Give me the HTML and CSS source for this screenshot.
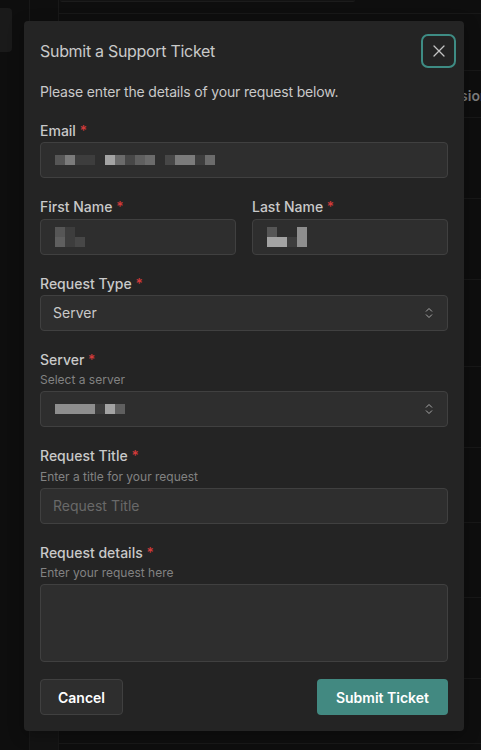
FILE: index.html
```html
<!DOCTYPE html>
<html lang="en">
<head>
  <meta charset="UTF-8" />
  <meta name="viewport" content="width=device-width, initial-scale=1" />
  <title>Support</title>
  <link rel="stylesheet" href="styles.css">
</head>
<body>
  <div class="app">
    <aside class="rail"><div class="rail-tab"></div></aside>
    <div class="gutter"><div class="gutter-foot"></div></div>
    <main class="content">
      <div class="topcard"></div>
      <div class="table">
        <div class="row bar"></div>
        <div class="row head">
          <span class="th">Session</span>
        </div>
        <div class="row"></div>
        <div class="row"></div>
        <div class="row tall"></div>
        <div class="row"></div>
        <div class="row short"></div>
        <div class="row short"></div>
        <div class="row"></div>
        <div class="row tiny"></div>
      </div>
    </main>
  </div>

  <div class="modal" role="dialog">
    <header class="modal-header">
      <h2 class="modal-title">Submit a Support Ticket</h2>
      <button class="close-btn" type="button">
        <svg width="12" height="12" viewBox="0 0 12 12"><path d="M1 1L11 11M11 1L1 11" stroke="#c4c4c4" stroke-width="1.3" stroke-linecap="round"/></svg>
      </button>
    </header>

    <p class="intro">Please enter the details of your request below.</p>

    <form class="form">
      <div class="field">
        <label class="label">Email <span class="req">*</span></label>
        <div class="input">
          <span class="redact">
            <i class="g4"></i><i class="g7"></i><i class="g2"></i><i class="g2"></i>
            <b></b>
            <i class="g9"></i><i class="g6"></i><i class="g3"></i><i class="g5"></i><i class="g6"></i>
            <b></b>
            <i class="g3"></i><i class="g7"></i><i class="g7"></i><i class="g2"></i><i class="g6"></i>
          </span>
        </div>
      </div>

      <div class="field-row">
        <div class="field">
          <label class="label">First Name <span class="req">*</span></label>
          <div class="input">
            <span class="redact two-rows cols-3">
              <i class="g4"></i><i class="g2"></i><b></b>
              <i class="g5"></i><i class="g2"></i><i class="g3"></i>
            </span>
          </div>
        </div>
        <div class="field">
          <label class="label">Last Name <span class="req">*</span></label>
          <div class="input">
            <span class="redact two-rows cols-4">
              <i class="g4"></i><b></b><b></b><i class="g8"></i>
              <i class="g9"></i><i class="g9"></i><i class="g2"></i><i class="g8"></i>
            </span>
          </div>
        </div>
      </div>

      <div class="field">
        <label class="label">Request Type <span class="req">*</span></label>
        <div class="input select">
          <span class="value">Server</span>
          <span class="chevrons">
            <svg width="8" height="12" viewBox="0 0 8 12"><path d="M1 4.5L4 1.5L7 4.5M1 7.5L4 10.5L7 7.5" fill="none" stroke="#a8a8a8" stroke-width="1"/></svg>
          </span>
        </div>
      </div>

      <div class="field">
        <label class="label">Server <span class="req">*</span></label>
        <p class="desc">Select a server</p>
        <div class="input select">
          <span class="redact">
            <i class="g8"></i><i class="g8"></i><i class="g8"></i><i class="g8"></i><i class="g2"></i><i class="g9"></i><i class="g5"></i>
          </span>
          <span class="chevrons">
            <svg width="8" height="12" viewBox="0 0 8 12"><path d="M1 4.5L4 1.5L7 4.5M1 7.5L4 10.5L7 7.5" fill="none" stroke="#a8a8a8" stroke-width="1"/></svg>
          </span>
        </div>
      </div>

      <div class="field">
        <label class="label">Request Title <span class="req">*</span></label>
        <p class="desc">Enter a title for your request</p>
        <div class="input"><span class="placeholder">Request Title</span></div>
      </div>

      <div class="field">
        <label class="label">Request details <span class="req">*</span></label>
        <p class="desc">Enter your request here</p>
        <div class="input textarea"></div>
      </div>

      <div class="actions">
        <button class="btn btn-default" type="button">Cancel</button>
        <button class="btn btn-teal" type="button">Submit Ticket</button>
      </div>
    </form>
  </div>
</body>
</html>
```

FILE: styles.css
```css
html, body {
  margin: 0;
  height: 100%;
}
body {
  background: #0e0e0e;
  font-family: Inter, "Noto Sans", sans-serif;
  color: #c9c9c9;
  overflow: hidden;
}

/* dimmed app behind the dialog */
.app {
  display: flex;
  height: 750px;
}
.rail {
  width: 29px;
  border-right: 1px solid #181818;
  padding-top: 8px;
  box-sizing: content-box;
}
.rail-tab {
  width: 12px;
  height: 44px;
  background: #1a1a1a;
  border-radius: 0 4px 4px 0;
}
.gutter {
  width: 28px;
  border-right: 1px solid #181818;
  display: flex;
  flex-direction: column;
  justify-content: flex-end;
}
.gutter-foot {
  height: 20px;
  background: #131313;
}
.content {
  flex: 1;
  min-width: 0;
}
.topcard {
  width: 295px;
  height: 1px;
  margin-left: 1px;
  background: #131313;
  border-bottom: 1px solid #1c1c1c;
  border-radius: 0 0 4px 4px;
}
.table {
  margin-top: 11px;
  border-top: 1px solid #181818;
}
.row {
  height: 80px;
  border-bottom: 1px solid #181818;
}
.row.bar { height: 56px; }
.row.head {
  height: 47px;
  display: flex;
  align-items: center;
  padding: 2px 0 0 376px;
  box-sizing: border-box;
  font-size: 14px;
  font-weight: 600;
  color: #7c7c7c;
  white-space: nowrap;
  overflow: hidden;
}
.row.tall { height: 86px; }
.row.short { height: 74px; }
.row.tiny { height: 64px; }

/* dialog */
.modal {
  position: absolute;
  left: 24px;
  top: 21px;
  width: 440px;
  box-sizing: border-box;
  padding: 0 16px 16px;
  background: #242424;
  border-radius: 4px;
  box-shadow: 0 4px 16px rgba(0, 0, 0, 0.3);
}
.modal-header {
  height: 60px;
  display: flex;
  align-items: center;
  justify-content: space-between;
}
.modal-title {
  margin: 0;
  font-size: 16px;
  font-weight: 400;
  line-height: 1.55;
  letter-spacing: -0.3px;
  color: #c9c9c9;
}
.close-btn {
  width: 35px;
  height: 34px;
  margin-right: -8px;
  padding: 0;
  display: flex;
  align-items: center;
  justify-content: center;
  background: transparent;
  border: 2px solid #3e8c84;
  border-radius: 7px;
}
.intro {
  margin: 0;
  font-size: 14px;
  line-height: 1.55;
  letter-spacing: -0.17px;
}

.form {
  margin-top: 17px;
  display: flex;
  flex-direction: column;
  gap: 18px;
}
.field-row {
  display: flex;
  gap: 16px;
}
.field-row .field { flex: 1; }
.field {
  display: flex;
  flex-direction: column;
}
.label {
  font-size: 14px;
  font-weight: 500;
  line-height: 22.4px;
  color: #c9c9c9;
}
.req { color: #d23a3a; }
.desc {
  margin: 0 0 1.5px;
  font-size: 12px;
  line-height: 18.6px;
  color: #828282;
}
.input {
  height: 36px;
  box-sizing: border-box;
  display: flex;
  align-items: center;
  padding: 0 12px;
  background: #2e2e2e;
  border: 1px solid #404040;
  border-radius: 4px;
  font-size: 14px;
}
.input.select {
  position: relative;
  padding-right: 36px;
}
.value { color: #c9c9c9; }
.placeholder { color: #696969; }
.chevrons {
  position: absolute;
  right: 0;
  top: 0;
  width: 36px;
  height: 100%;
  display: flex;
  align-items: center;
  justify-content: center;
}
.input.textarea {
  height: 78px;
}

/* blurred personal data */
.redact {
  display: flex;
  margin-left: 2px;
}
.redact i,
.redact b {
  display: block;
  width: 10px;
  height: 10px;
}
.redact.two-rows {
  display: grid;
  grid-auto-rows: 10px;
  margin-top: 1px;
}
.cols-3 { grid-template-columns: repeat(3, 10px); }
.cols-4 { grid-template-columns: repeat(4, 10px); }
.g2 { background: #3d3d3d; }
.g3 { background: #474747; }
.g4 { background: #565656; }
.g5 { background: #5f5f5f; }
.g6 { background: #6b6b6b; }
.g7 { background: #7b7b7b; }
.g8 { background: #8e8e8e; }
.g9 { background: #a3a3a3; }

.actions {
  margin-top: -1px;
  display: flex;
  justify-content: space-between;
}
.btn {
  height: 36px;
  padding: 0 18px;
  font-family: inherit;
  font-size: 14px;
  font-weight: 600;
  color: #fff;
  border-radius: 4px;
}
.btn-default {
  padding: 0 17px;
  background: #2e2e2e;
  border: 1px solid #404040;
}
.btn-teal {
  background: #428981;
  border: 1px solid transparent;
}
```
